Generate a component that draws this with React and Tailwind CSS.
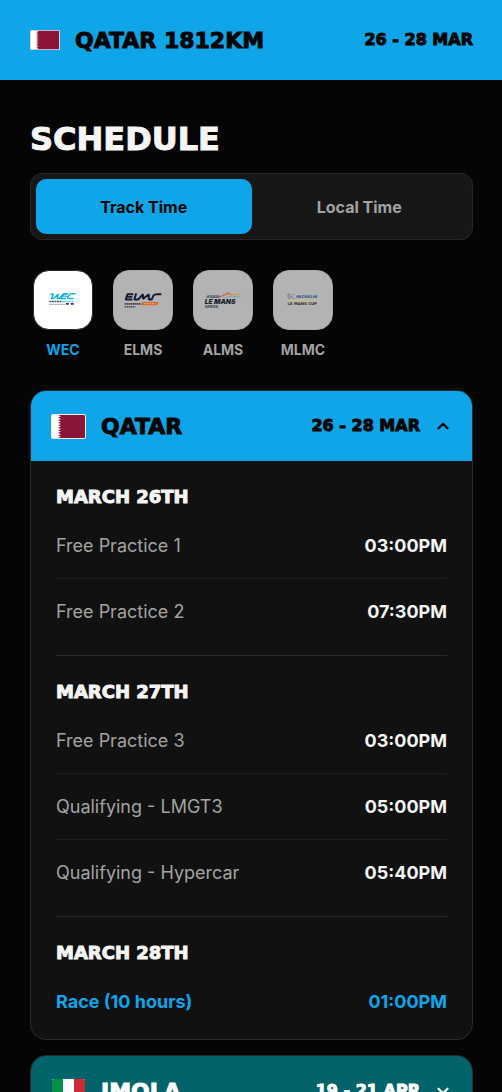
import React, { useState } from 'react';
import { ChevronDown, ChevronUp } from 'lucide-react';

const display = "font-['DejaVu_Sans',sans-serif] font-bold [-webkit-text-stroke:1px_currentColor]";

const rounds = [
  {
    name: 'QATAR',
    dates: '26 - 28 MAR',
    Flag: QatarFlag,
    header: 'bg-[#0fa5e9] text-[#050505]',
    days: [
      {
        title: 'MARCH 26TH',
        sessions: [
          { name: 'Free Practice 1', time: '03:00PM' },
          { name: 'Free Practice 2', time: '07:30PM' },
        ],
      },
      {
        title: 'MARCH 27TH',
        sessions: [
          { name: 'Free Practice 3', time: '03:00PM' },
          { name: 'Qualifying - LMGT3', time: '05:00PM' },
          { name: 'Qualifying - Hypercar', time: '05:40PM' },
        ],
      },
      {
        title: 'MARCH 28TH',
        sessions: [{ name: 'Race (10 hours)', time: '01:00PM', race: true }],
      },
    ],
  },
  {
    name: 'IMOLA',
    dates: '19 - 21 APR',
    Flag: ItalyFlag,
    header: 'bg-[#02646a] text-white',
    days: [],
  },
];

const series = [
  { id: 'WEC', Logo: WecLogo },
  { id: 'ELMS', Logo: ElmsLogo },
  { id: 'ALMS', Logo: AlmsLogo },
  { id: 'MLMC', Logo: MlmcLogo },
];

function QatarFlag({ className }) {
  return (
    <svg viewBox="0 0 35 25" preserveAspectRatio="none" className={className} aria-hidden="true">
      <rect width="35" height="25" rx="2" fill="#f3e9ee" />
      <rect x="1" y="1" width="33" height="23" rx="1" fill="#8a1538" />
      <path
        d="M1 1H7L10 2.3L7 3.6L10 4.9L7 6.2L10 7.4L7 8.7L10 10L7 11.3L10 12.5L7 13.8L10 15.1L7 16.4L10 17.6L7 18.9L10 20.2L7 21.5L10 22.8L7 24H1Z"
        fill="#fff"
      />
    </svg>
  );
}

function ItalyFlag({ className }) {
  return (
    <svg viewBox="0 0 35 25" preserveAspectRatio="none" className={className} aria-hidden="true">
      <rect x="1" width="33" height="25" rx="1" fill="#fff" />
      <path d="M2 0H12V25H2L1 24V1Z" fill="#009246" />
      <path d="M23 0H33L34 1V24L33 25H23Z" fill="#ce2b37" />
    </svg>
  );
}

function WecLogo() {
  return (
    <svg viewBox="0 0 60 60" className="size-full" aria-hidden="true">
      <g fill="none" stroke="#12b0ea" strokeWidth="1.5" strokeLinejoin="round">
        <path d="M17 24H20L18 28.500H20L25 24L24 28.500H26L31 23.500H35" />
        <path d="M35 23.500H31L27 28.500H33M29 26H34" />
        <path d="M43 23.500H38L34.500 27L35.500 28.500H41" />
      </g>
      <path d="M16 31.500H29" stroke="#444d61" strokeWidth="1.500" strokeDasharray="2 .6" />
      <path d="M29 31.500H41" stroke="#65c7ea" strokeWidth="1.500" strokeDasharray="2 .5" />
      <path d="M16 34.500H32" stroke="#8b8f98" strokeDasharray="2 .8" />
      <path d="M33 33h3v2h-3zM38 33h3v2h-3z" fill="#29335d" />
    </svg>
  );
}

function ElmsLogo() {
  return (
    <svg viewBox="0 0 60 60" className="size-full" aria-hidden="true">
      <g fill="none" stroke="#171b3b" strokeWidth="2" strokeLinejoin="bevel">
        <path d="M20 24H14L12 29.500H19M13 26.800H19" />
        <path d="M23 23L21 29.500H25L30 24V29L36 24V29.500H39L41 25L44 24H49" />
      </g>
      <path d="M11 34H28" stroke="#3c3e50" strokeWidth="2" strokeDasharray="1.600 .5" />
      <path d="M29 32H46L45 35.500H28Z" fill="#d9682c" />
      <path d="M31 33.800H43" stroke="#e9b28f" strokeDasharray="2 .8" />
      <path d="M11 37H22" stroke="#4a4c5d" strokeWidth="1.500" strokeDasharray="1.500 .5" />
    </svg>
  );
}

function AlmsLogo() {
  return (
    <svg viewBox="0 0 60 60" className="size-full" aria-hidden="true">
      <text x="13" y="28" fontSize="4" fontStyle="italic" fontWeight="700" fill="#34424e" fontFamily="Inter, sans-serif">ASIAN</text>
      <text x="11" y="34" fontSize="7" fontStyle="italic" fontWeight="900" fill="#17222e" fontFamily="Inter, sans-serif">LE MANS</text>
      <text x="11" y="38" fontSize="4" fontStyle="italic" fill="#34424e" fontFamily="Inter, sans-serif">SERIES</text>
      <g fill="none">
        <path d="M30 27C36 21 40 27 48 23.500" stroke="#df8c38" />
        <path d="M26 27C32 25 34 22 38 23" stroke="#ce4145" />
        <path d="M32 28L39 26L48 27" stroke="#5bafa9" />
      </g>
    </svg>
  );
}

function MlmcLogo() {
  return (
    <svg viewBox="0 0 60 60" className="size-full" aria-hidden="true">
      <g fill="none" stroke="#65717d" strokeWidth=".8">
        <circle cx="15.500" cy="25" r="1.200" />
        <path d="M14 26L16 29L18 26L21 29M19 25L21 24" />
      </g>
      <text x="23" y="28" fontSize="4" fontStyle="italic" fontWeight="700" fill="#1d4f89" fontFamily="DejaVu Sans, sans-serif">MICHELIN</text>
      <path d="M15 30.500H41" stroke="#cec366" strokeWidth="1" />
      <text x="14" y="35" fontSize="4" fontWeight="700" fill="#252a30" fontFamily="DejaVu Sans, sans-serif">LE MANS CUP</text>
    </svg>
  );
}

function Day({ day }) {
  return (
    <section className="border-b border-[#292929] pt-[26px] pb-[10px] last:border-b-0 last:pb-1">
      <h3 className={`mb-[6px] text-lg leading-5 text-[#f5f5f5] ${display}`}>{day.title}</h3>
      <ul>
        {day.sessions.map((session) => (
          <li
            key={session.name}
            className={`flex h-[66px] items-center justify-between border-b border-[#1e1e1e] text-lg last:border-b-0 ${
              session.race ? 'font-bold text-[#0fa5e9]' : 'text-[#a3a3a3]'
            }`}
          >
            <span>{session.name}</span>
            <span className={session.race ? '' : 'font-bold text-[#f5f5f5]'}>{session.time}</span>
          </li>
        ))}
      </ul>
    </section>
  );
}

function RoundCard({ round, open, onToggle }) {
  const Chevron = open ? ChevronUp : ChevronDown;

  return (
    <article className="overflow-hidden rounded-2xl border border-[#2a2a2a] bg-[#111]">
      <button
        type="button"
        onClick={onToggle}
        aria-expanded={open}
        className={`flex h-[70px] w-full items-center px-5 ${round.header}`}
      >
        <round.Flag className="h-[25px] w-[35px]" />
        <h2 className={`ml-[15px] text-[22px] ${display}`}>{round.name}</h2>
        <span className={`ml-auto text-base ${display}`}>{round.dates}</span>
        <Chevron size={18} strokeWidth={3} className="ml-[14px]" />
      </button>
      {open && (
        <div className="px-[25px]">
          {round.days.map((day) => (
            <Day key={day.title} day={day} />
          ))}
        </div>
      )}
    </article>
  );
}

export default function App() {
  const [timeMode, setTimeMode] = useState('Track Time');
  const [activeSeries, setActiveSeries] = useState('WEC');
  const [openRound, setOpenRound] = useState('QATAR');

  return (
    <div className="min-h-screen bg-[#050505] font-['Inter',sans-serif]">
      <header className="flex h-20 items-center bg-[#0fa5e9] pr-[29px] pl-[30px] text-[#050505]">
        <QatarFlag className="h-5 w-[30px]" />
        <span className={`ml-[15px] text-[22px] ${display}`}>QATAR 1812KM</span>
        <span className={`ml-auto text-base ${display}`}>26 - 28 MAR</span>
      </header>

      <main className="pt-10 pr-[29px] pb-8 pl-[30px]">
        <h1 className={`mb-[15px] text-[32px] leading-[38px] text-[#f5f5f5] ${display}`}>SCHEDULE</h1>

        <div className="flex rounded-xl border border-[#272727] bg-[#171717] p-[5px]">
          {['Track Time', 'Local Time'].map((mode) => (
            <button
              key={mode}
              type="button"
              aria-pressed={timeMode === mode}
              onClick={() => setTimeMode(mode)}
              className={`h-[55px] flex-1 rounded-[10px] text-base font-bold ${
                timeMode === mode ? 'bg-[#0fa5e9] text-[#050505]' : 'text-[#a3a3a3]'
              }`}
            >
              {mode}
            </button>
          ))}
        </div>

        <div className="mt-[30px] flex gap-5 px-[3px]">
          {series.map(({ id, Logo }) => (
            <button
              key={id}
              type="button"
              aria-pressed={activeSeries === id}
              onClick={() => setActiveSeries(id)}
              className={`flex w-[60px] flex-col items-center gap-[10px] text-sm font-bold ${
                activeSeries === id ? 'text-[#0fa5e9]' : 'text-[#a3a3a3]'
              }`}
            >
              <span
                className={`size-[60px] rounded-2xl border ${
                  activeSeries === id ? 'border-[#292929] bg-white' : 'border-[#a8a8a8] bg-[#b3b3b3]'
                }`}
              >
                <Logo />
              </span>
              {id}
            </button>
          ))}
        </div>

        <div className="mt-[30px] flex flex-col gap-[15px]">
          {rounds.map((round) => (
            <RoundCard
              key={round.name}
              round={round}
              open={openRound === round.name}
              onToggle={() => setOpenRound(openRound === round.name ? '' : round.name)}
            />
          ))}
        </div>
      </main>
    </div>
  );
}
